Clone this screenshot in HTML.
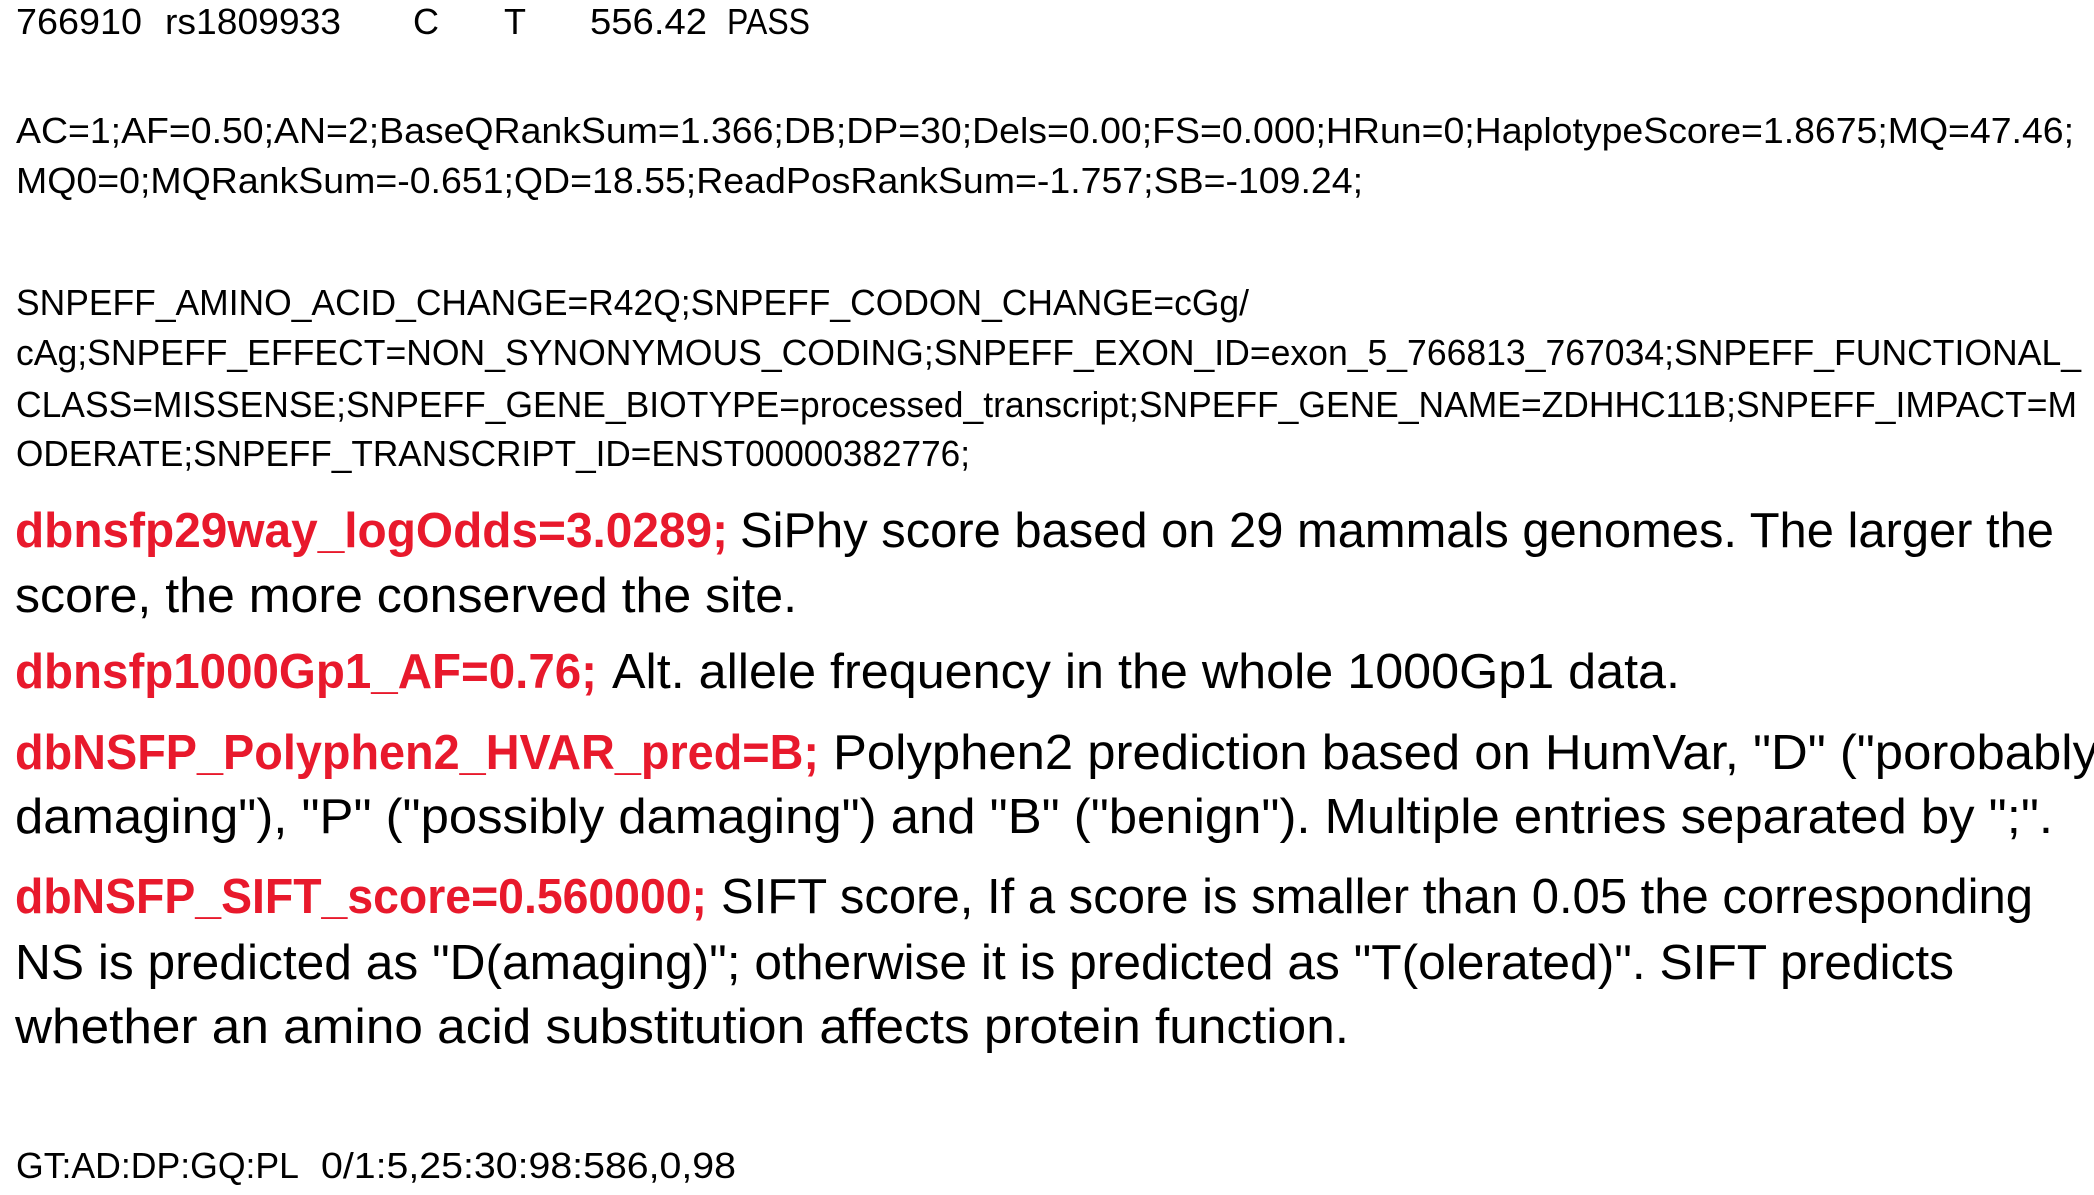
<!DOCTYPE html>
<html><head><meta charset="utf-8"><style>
html,body{margin:0;padding:0;background:#fff;width:2094px;height:1195px;overflow:hidden}
svg{display:block}
text{font-family:"Liberation Sans",sans-serif;fill:#000;white-space:pre}
.s{font-size:36px}
.l{font-size:49px}
.r{font-size:49px;font-weight:bold;fill:#e8192c}
</style></head><body>
<svg width="2094" height="1195" viewBox="0 0 2094 1195" xmlns="http://www.w3.org/2000/svg">
<text class="s" x="16" y="34" textLength="126" lengthAdjust="spacingAndGlyphs">766910</text>
<text class="s" x="165" y="34" textLength="176" lengthAdjust="spacingAndGlyphs">rs1809933</text>
<text class="s" x="413" y="34">C</text>
<text class="s" x="504" y="34">T</text>
<text class="s" x="590" y="34" textLength="117" lengthAdjust="spacingAndGlyphs">556.42</text>
<text class="s" x="727" y="34" textLength="83" lengthAdjust="spacingAndGlyphs">PASS</text>

<text class="s" x="16" y="143" textLength="2058" lengthAdjust="spacingAndGlyphs">AC=1;AF=0.50;AN=2;BaseQRankSum=1.366;DB;DP=30;Dels=0.00;FS=0.000;HRun=0;HaplotypeScore=1.8675;MQ=47.46;</text>
<text class="s" x="16" y="193" textLength="1347" lengthAdjust="spacingAndGlyphs">MQ0=0;MQRankSum=-0.651;QD=18.55;ReadPosRankSum=-1.757;SB=-109.24;</text>

<text class="s" x="16" y="315" textLength="1233" lengthAdjust="spacingAndGlyphs">SNPEFF_AMINO_ACID_CHANGE=R42Q;SNPEFF_CODON_CHANGE=cGg/</text>
<text class="s" x="16" y="365" textLength="2065" lengthAdjust="spacingAndGlyphs">cAg;SNPEFF_EFFECT=NON_SYNONYMOUS_CODING;SNPEFF_EXON_ID=exon_5_766813_767034;SNPEFF_FUNCTIONAL_</text>
<text class="s" x="16" y="417" textLength="2061" lengthAdjust="spacingAndGlyphs">CLASS=MISSENSE;SNPEFF_GENE_BIOTYPE=processed_transcript;SNPEFF_GENE_NAME=ZDHHC11B;SNPEFF_IMPACT=M</text>
<text class="s" x="16" y="466" textLength="954" lengthAdjust="spacingAndGlyphs">ODERATE;SNPEFF_TRANSCRIPT_ID=ENST00000382776;</text>

<text class="r" x="15" y="547" textLength="713" lengthAdjust="spacingAndGlyphs">dbnsfp29way_logOdds=3.0289;</text>
<text class="l" x="740" y="547" textLength="1314" lengthAdjust="spacingAndGlyphs">SiPhy score based on 29 mammals genomes. The larger the</text>
<text class="l" x="15" y="612" textLength="782" lengthAdjust="spacingAndGlyphs">score, the more conserved the site.</text>

<text class="r" x="15" y="688" textLength="582" lengthAdjust="spacingAndGlyphs">dbnsfp1000Gp1_AF=0.76;</text>
<text class="l" x="612" y="688" textLength="1068" lengthAdjust="spacingAndGlyphs">Alt. allele frequency in the whole 1000Gp1 data.</text>

<text class="r" x="15" y="769" textLength="804" lengthAdjust="spacingAndGlyphs">dbNSFP_Polyphen2_HVAR_pred=B;</text>
<text class="l" x="833" y="769" textLength="1265" lengthAdjust="spacingAndGlyphs">Polyphen2 prediction based on HumVar, "D" ("porobably</text>
<text class="l" x="15" y="833" textLength="2038" lengthAdjust="spacingAndGlyphs">damaging"), "P" ("possibly damaging") and "B" ("benign"). Multiple entries separated by ";".</text>

<text class="r" x="15" y="913" textLength="692" lengthAdjust="spacingAndGlyphs">dbNSFP_SIFT_score=0.560000;</text>
<text class="l" x="721" y="913" textLength="1312" lengthAdjust="spacingAndGlyphs">SIFT score, If a score is smaller than 0.05 the corresponding</text>
<text class="l" x="15" y="979" textLength="1939" lengthAdjust="spacingAndGlyphs">NS is predicted as "D(amaging)"; otherwise it is predicted as "T(olerated)". SIFT predicts</text>
<text class="l" x="15" y="1043" textLength="1334" lengthAdjust="spacingAndGlyphs">whether an amino acid substitution affects protein function.</text>

<text class="s" x="16" y="1178" textLength="283" lengthAdjust="spacingAndGlyphs">GT:AD:DP:GQ:PL</text>
<text class="s" x="321" y="1178" textLength="415" lengthAdjust="spacingAndGlyphs">0/1:5,25:30:98:586,0,98</text>
</svg>
</body></html>
